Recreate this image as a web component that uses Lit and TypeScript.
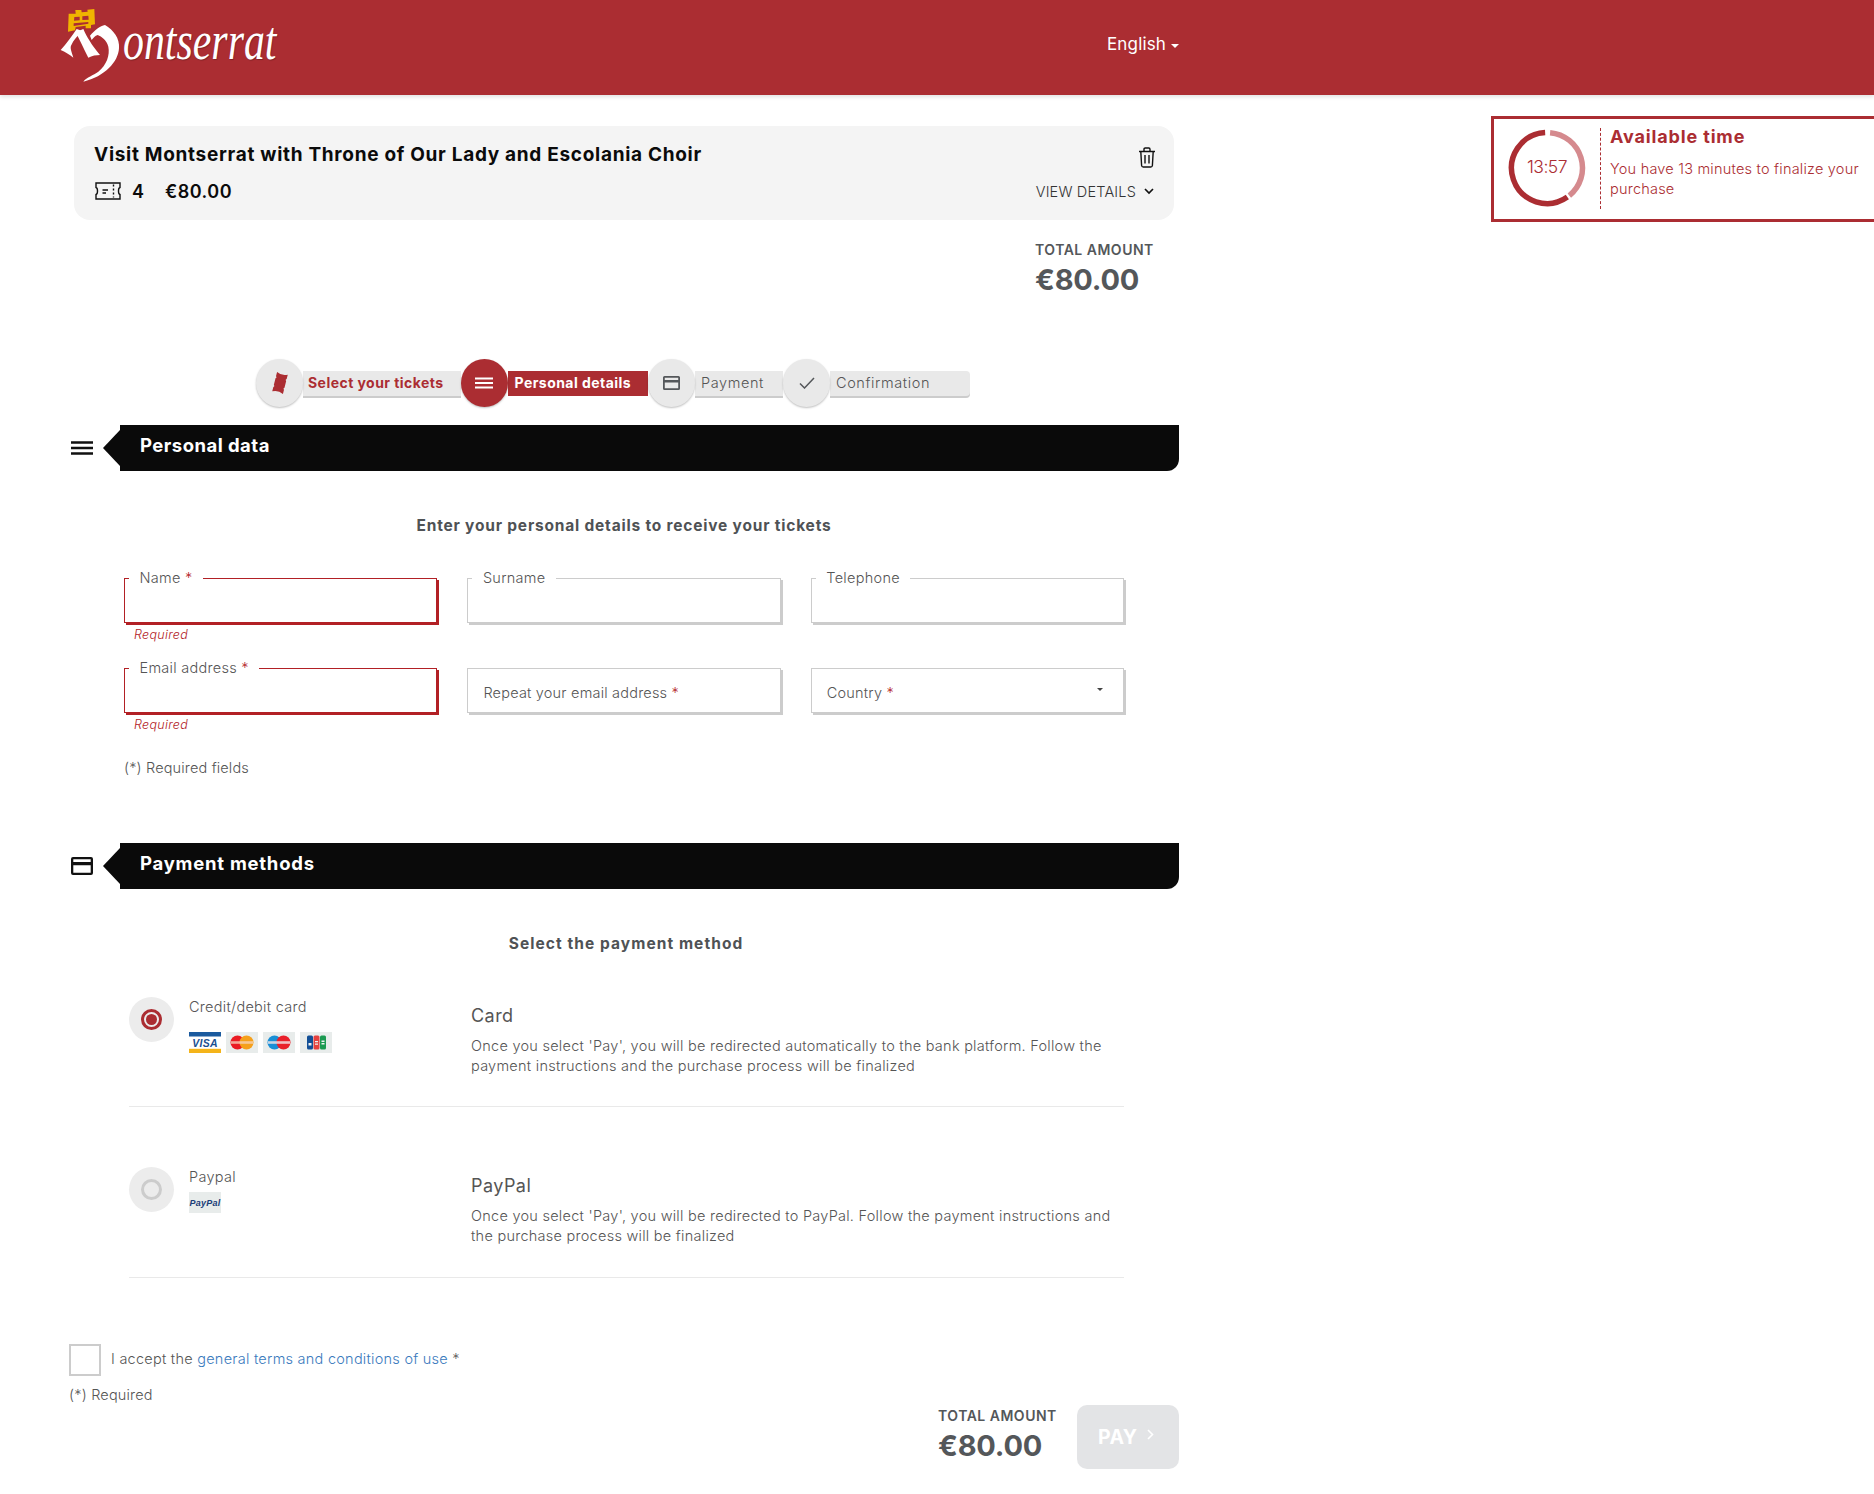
import { LitElement, html, css, svg } from "lit";
import { customElement } from "lit/decorators.js";

const polar = (cx: number, cy: number, r: number, deg: number) => {
  const a = ((deg - 90) * Math.PI) / 180;
  return [cx + r * Math.cos(a), cy + r * Math.sin(a)];
};
const arc = (cx: number, cy: number, r: number, a0: number, a1: number) => {
  const [x0, y0] = polar(cx, cy, r, a0);
  const [x1, y1] = polar(cx, cy, r, a1);
  const large = a1 - a0 > 180 ? 1 : 0;
  return `M${x0.toFixed(2)} ${y0.toFixed(2)}A${r} ${r} 0 ${large} 1 ${x1.toFixed(2)} ${y1.toFixed(2)}`;
};

const menuIcon = (w: number, h: number, color: string) => html`<svg width=${w} height=${h} viewBox="0 0 22 14"><path d="M0 1.5H22M0 7H22M0 12.5H22" stroke=${color} stroke-width="2.4" fill="none"/></svg>`;
const cardIcon = (w: number, h: number, color: string) => html`<svg width=${w} height=${h} viewBox="0 0 22 18"><path fill-rule="evenodd" fill=${color} d="M2 0H20A2 2 0 0 1 22 2V16A2 2 0 0 1 20 18H2A2 2 0 0 1 0 16V2A2 2 0 0 1 2 0ZM2.300 2.300V5H19.700V2.300ZM2.300 8.200V15.700H19.700V8.200Z"/></svg>`;

const cardLogos = {
  visa: html`<svg class="logo" viewBox="0 0 32 21"><rect width="32" height="21" fill="#fff"/><rect width="32" height="4.500" fill="#1a5a9e"/><rect y="16.800" width="32" height="4.200" fill="#f4b41a"/><text x="16" y="14.500" text-anchor="middle" font-family="Liberation Sans" font-weight="700" font-style="italic" font-size="10.500" fill="#1a4f92">VISA</text></svg>`,
  mc: html`<svg class="logo" viewBox="0 0 32 21"><rect width="32" height="21" fill="#e8eceb"/><circle cx="11.500" cy="10.500" r="7" fill="#ea1c24"/><circle cx="20.500" cy="10.500" r="7" fill="#f5a01b"/><rect x="5" y="9.200" width="22" height="2.600" fill="#f5d6c0" opacity=".75"/></svg>`,
  maestro: html`<svg class="logo" viewBox="0 0 32 21"><rect width="32" height="21" fill="#e8eceb"/><circle cx="11.500" cy="10.500" r="7" fill="#1a8fd6"/><circle cx="20.500" cy="10.500" r="7" fill="#e9202b"/><rect x="5" y="9.200" width="22" height="2.600" fill="#f2e6ea" opacity=".8"/></svg>`,
  jcb: html`<svg class="logo" viewBox="0 0 32 21"><rect width="32" height="21" fill="#e8eceb"/><rect x="7" y="3.500" width="6" height="14" rx="1.500" fill="#124f96"/><rect x="13.500" y="3.500" width="6" height="14" rx="1.500" fill="#e5413f"/><rect x="20" y="3.500" width="6" height="14" rx="1.500" fill="#1c9a52"/><path d="M8.500 11H11.500V13.500H8.500ZM15 9H18V10.200H15ZM15 11.500H18V12.700H15ZM21.500 8.500H24.500V10H21.500ZM21.500 11H24.500V12.500H21.500Z" fill="#eef2f1"/></svg>`,
  paypal: html`<svg class="logo" viewBox="0 0 32 21"><rect width="32" height="21" fill="#e8eceb"/><text x="16" y="14" text-anchor="middle" font-family="Liberation Sans" font-weight="700" font-style="italic" font-size="9" fill="#1c3e78">PayPal</text></svg>`,
};

@customElement("app-root")
export class AppRoot extends LitElement {
  static styles = css`
    :host { display: block; width: 1874px; height: 1494px; overflow: hidden; background: #fff; color: #555; font-family: Inter, "Liberation Sans", sans-serif; font-size: 15px; font-weight: 300; letter-spacing: .35px; }
    * { box-sizing: border-box; }
    header { height: 95px; background: #ab2d32; box-shadow: 0 2px 4px rgba(0,0,0,.12); display: flex; padding-left: 55px; position: relative; }
    .brand { flex: none; width: 1052px; display: flex; align-items: flex-start; padding-top: 5px; }
    .brand svg { flex: none; margin-right: -22px; }
    .brandtext { font-family: "Liberation Serif", serif; font-style: italic; font-size: 54px; line-height: 62px; color: #fff; letter-spacing: 0; transform: scaleX(.775); transform-origin: left top; white-space: nowrap; margin-top: 5px; text-shadow: 1px 1px 1px rgba(0,0,0,.25); font-weight: 400; }
    .lang { color: #fff; font-size: 17px; font-weight: 400; margin-top: 33px; line-height: 22px; display: flex; align-items: center; gap: 5px; letter-spacing: .15px; height: 22px; }
    .lang i { width: 0; height: 0; border: 4px solid transparent; border-top-color: #fff; border-bottom: 0; margin-top: 3px; }

    .page { display: grid; grid-template-columns: 1491px 1fr; }
    .aside { padding-top: 21px; }
    .timer { width: 500px; height: 106px; border: 3px solid #ab2d32; display: flex; align-items: flex-start; color: #ab2d32; }
    .timer svg { flex: none; margin: 9px 0 0 13px; }
    .timer svg text { font-family: Inter, sans-serif; font-weight: 300; font-size: 17.5px; fill: #ab2d32; letter-spacing: -.5px; }
    .sep { flex: none; height: 81px; margin: 9px 0 0 13px; border-left: 1px dashed #ab2d32; }
    .ttext { padding: 6px 0 0 9px; width: 275px; }
    .ttitle { font-size: 18px; font-weight: 700; line-height: 24px; letter-spacing: .85px; }
    .tdesc { margin-top: 10px; line-height: 20px; font-size: 14.5px; font-weight: 300; width: 262px; letter-spacing: .22px; }

    .card { margin: 31px 0 0 74px; width: 1100px; height: 94px; background: #f4f4f4; border-radius: 16px; padding: 17px 18px 0 20px; color: #0b0b0b; }
    .r1, .r2 { display: flex; justify-content: space-between; }
    .ctitle { font-size: 19px; line-height: 24px; font-weight: 700; letter-spacing: .7px; }
    .trash { margin-top: 4px; }
    .r2 { margin-top: 12px; height: 22px; align-items: center; }
    .qty { display: flex; align-items: center; font-size: 18px; font-weight: 600; letter-spacing: .5px; }
    .qty svg { margin-left: 1px; }
    .qty .n { margin-left: 11px; width: 33px; }
    .view { display: flex; align-items: center; gap: 8px; font-size: 14.5px; letter-spacing: .17px; margin-right: 2px; color: #333; }

    .total { margin: 22px 0 0 1035px; width: 160px; }
    .tl { font-size: 14px; font-weight: 600; line-height: 16px; letter-spacing: .5px; color: #54575a; }
    .tv { font-size: 29px; font-weight: 700; line-height: 40px; margin-top: 2px; margin-bottom: -1px; color: #54575a; letter-spacing: -.2px; }

    .steps { margin: 60px 0 0 256px; width: 714px; height: 48px; display: flex; }
    .step { display: flex; align-items: center; flex: none; }
    .s1 { width: 204.5px; } .s2 { width: 187.5px; } .s3 { width: 135px; } .s4 { width: 187px; }
    .circle { flex: none; position: relative; z-index: 1; width: 47px; height: 48px; border-radius: 50%; background: #e9e9e9; display: grid; place-items: center; box-shadow: 0 1px 2px rgba(0,0,0,.25); }
    .lbl { flex: 1; height: 25px; background: #e9e9e9; box-shadow: 0 2px 0 #ccc; padding-left: 6px; line-height: 24px; font-size: 14.5px; white-space: nowrap; letter-spacing: .6px; }
    .s1 .lbl { color: #ab2d32; font-weight: 700; font-size: 14px; letter-spacing: .45px; padding-left: 5px; line-height: 23px; }
    .s2 .circle { background: #ab2d32; }
    .s2 .lbl { background: #ab2d32; color: #fff; font-weight: 700; font-size: 14px; letter-spacing: .45px; box-shadow: none; padding-left: 7px; line-height: 23px; }
    .s4 .lbl { border-radius: 0 4px 4px 0; }

    .sect { display: flex; align-items: center; margin: 18px 0 0 71px; width: 1108px; height: 46px; }
    .sicon { flex: none; width: 22px; margin-right: 10px; display: grid; place-items: center; }
    .arrow { flex: none; width: 17px; height: 36px; background: #0a0a0a; clip-path: polygon(100% 0, 0 50%, 100% 100%); }
    .bar { flex: 1; height: 46px; background: #0a0a0a; border-radius: 0 0 12px 0; color: #fff; font-size: 18.5px; font-weight: 700; line-height: 41px; padding-left: 20px; letter-spacing: .47px; }

    .sub { text-align: center; font-size: 15.5px; font-weight: 700; line-height: 20px; margin-top: 45px; margin-bottom: -1px; color: #4f5255; letter-spacing: .8px; }
    .sub.a { width: 1248px; } .sub.b { width: 1252px; letter-spacing: 1.07px; }
    .sect.pay .bar { letter-spacing: .75px; }
    .fields { margin: 43px 0 0 124px; display: grid; grid-template-columns: repeat(3, 313.4px); column-gap: 30px; grid-auto-rows: 90px; }
    .box { position: relative; height: 45px; border: 1px solid #ccc; box-shadow: 2px 2px 0 #ccc; background: #fff; }
    .box.err { border-color: #b22025; box-shadow: 2px 2px 0 #b22025; }
    .flabel { position: absolute; left: 4px; top: -9px; padding: 0 10.5px; background: #fff; line-height: 16px; font-size: 14.5px; letter-spacing: .28px; white-space: nowrap; }
    .ph { padding: 14px 0 0 15px; line-height: 20px; font-size: 14.5px; letter-spacing: .2px; }
    .star { color: #b22025; }
    .caret { position: absolute; right: 20px; top: 19px; width: 0; height: 0; border: 3.5px solid transparent; border-top-color: #444; border-bottom: 0; }
    .req { font-style: italic; color: #b22025; font-size: 12.5px; line-height: 16px; padding: 4px 0 0 10px; letter-spacing: .3px; }
    .note { margin-left: 124px; line-height: 20px; letter-spacing: .15px; font-size: 14.5px; }

    .sect.pay { margin-top: 65px; }
    .methods { margin: 44px 0 0 129px; width: 995px; }
    .method { display: flex; height: 111px; border-bottom: 1px solid #e9e9e9; margin-bottom: 59px; }
    .method.first { height: 110px; margin-bottom: 60px; }
    .method.last { margin-bottom: 0; }
    .radio { flex: none; width: 45px; height: 45px; border-radius: 50%; background: #ececec; display: grid; place-items: center; margin-right: 15px; }
    .ring { width: 21px; height: 21px; border: 3px solid #ccc; border-radius: 50%; display: grid; place-items: center; }
    .ring.on { border-color: #ab2d32; }
    .ring.on i { width: 11px; height: 11px; border-radius: 50%; background: #ab2d32; }
    .mlabel { flex: none; width: 282px; line-height: 20px; font-size: 14.5px; letter-spacing: .28px; }
    .logos { display: flex; gap: 5px; margin-top: 15px; }
    .logos.p { margin-top: 5px; }
    .logo { width: 32px; height: 21px; display: block; }
    .mbody { flex: 1; padding-top: 7px; }
    .mtitle { font-size: 18px; line-height: 24px; font-weight: 400; letter-spacing: .45px; }
    .mdesc { margin-top: 8px; line-height: 20px; font-size: 14.5px; letter-spacing: .26px; width: 650px; }

    .accept { display: flex; align-items: center; margin: 66px 0 0 69px; height: 32px; letter-spacing: .25px; font-size: 14.5px; }
    .accept span { margin-top: -4px; }
    .check { flex: none; width: 32px; height: 32px; border: 2px solid #ccc; margin-right: 10px; }
    .accept a { color: #3a7abd; text-decoration: none; }
    .note2 { margin: 9px 0 0 69px; line-height: 20px; font-size: 14.5px; letter-spacing: .18px; }
    .foot { display: flex; justify-content: flex-end; margin-top: 0; width: 1179px; }
    .ftotal { padding-top: 3px; width: 139px; }
    .paybtn { flex: none; width: 102px; height: 64px; border-radius: 10px; background: #e3e4e6; color: #fff; font-weight: 700; font-size: 19.5px; display: flex; align-items: center; padding-left: 21px; gap: 9px; letter-spacing: .4px; }
    .paybtn svg { margin-top: -6px; }
  `;

  render() {
    return html`
      <header>
        <div class="brand">
          <svg width="90" height="80" viewBox="0 0 270 240">
            <path fill="#f0b400" fill-rule="evenodd" d="M41 26L62 26L61 15L79 15L80 22L98 20L97 14L118 12L120 58L108 60L108 70L92 70L92 62L62 66L60 76L39 80ZM58 36L57 47L74 46L74 35ZM82 34L82 45L101 44L100 32ZM56 55L56 63L100 56L100 51Z"/>
            <path fill="#fff" d="M65 72C50 95 35 115 17 135C30 140 45 150 55 158C50 140 45 130 48 122C55 105 70 90 82 78Z"/>
            <path fill="#fff" d="M62 82L85 72C95 95 110 120 135 150C125 150 110 152 100 158C85 130 75 105 62 82Z"/>
            <path fill="#fff" d="M105 92C120 75 135 62 150 60C175 75 195 100 192 130C190 170 150 215 85 230C95 215 115 212 130 200C155 180 165 150 160 125C155 105 140 95 128 90C120 92 115 100 110 105Z"/>
          </svg>
          <div class="brandtext">ontserrat</div>
        </div>
        <div class="lang">English<i></i></div>
      </header>

      <div class="page">
        <main>
          <section class="card">
            <div class="r1">
              <div class="ctitle">Visit Montserrat with Throne of Our Lady and Escolania Choir</div>
              <svg class="trash" width="18" height="21" viewBox="0 0 18 21" fill="none" stroke="#111" stroke-width="1.400"><path d="M1 4.500H17M6 4.500V2.200C6 1.500 6.500 1 7.200 1H10.800C11.500 1 12 1.500 12 2.200V4.500M2.800 4.500L3.600 18.500C3.700 19.400 4.400 20 5.200 20H12.800C13.600 20 14.300 19.400 14.400 18.500L15.200 4.500M7 8V16.500M11 8V16.500"/></svg>
            </div>
            <div class="r2">
              <div class="qty">
                <svg width="26" height="18" viewBox="0 0 26 18" fill="none" stroke="#111" stroke-width="1.400"><path d="M1 1H25V5.500C23 6 23 12 25 12.500V17H1V12.500C3 12 3 6 1 5.500ZM7.500 8H13M7.500 11H11"/><path d="M18.500 2.500V15.500" stroke-dasharray="2 2"/></svg>
                <span class="n">4</span><span>€80.00</span>
              </div>
              <div class="view">VIEW DETAILS <svg width="10" height="7" viewBox="0 0 10 7" fill="none" stroke="#111" stroke-width="1.700"><path d="M1 1L5 5L9 1"/></svg></div>
            </div>
          </section>

          <div class="total"><div class="tl">TOTAL AMOUNT</div><div class="tv">€80.00</div></div>

          <nav class="steps">
            <div class="step s1">
              <div class="circle"><svg width="16" height="22" viewBox="0 0 16 22"><path fill="#ab2d32" transform="rotate(14 8 11)" d="M2.500 1Q8 4 13.500 1L13.500 5.500Q12 6.500 13.500 7.500V14.500Q12 15.500 13.500 16.500L13.500 21Q8 18 2.500 21L2.500 16.500Q4 15.500 2.500 14.500V7.500Q4 6.500 2.500 5.500Z"/></svg></div>
              <div class="lbl">Select your tickets</div>
            </div>
            <div class="step s2">
              <div class="circle">${menuIcon(18, 14, "#fff")}</div>
              <div class="lbl">Personal details</div>
            </div>
            <div class="step s3">
              <div class="circle">${cardIcon(17, 14, "#54575a")}</div>
              <div class="lbl">Payment</div>
            </div>
            <div class="step s4">
              <div class="circle"><svg width="16" height="12" viewBox="0 0 16 12" fill="none" stroke="#54575a" stroke-width="1.500"><path d="M1 6.500L5.500 11L15 1"/></svg></div>
              <div class="lbl">Confirmation</div>
            </div>
          </nav>

          <div class="sect">
            <div class="sicon">${menuIcon(22, 14, "#111")}</div>
            <div class="arrow"></div>
            <div class="bar">Personal data</div>
          </div>

          <div class="sub a">Enter your personal details to receive your tickets</div>

          <div class="fields">
            <div><div class="box err"><span class="flabel">Name <span class="star">*</span></span></div><div class="req">Required</div></div>
            <div><div class="box"><span class="flabel">Surname</span></div></div>
            <div><div class="box"><span class="flabel">Telephone</span></div></div>
            <div><div class="box err"><span class="flabel">Email address <span class="star">*</span></span></div><div class="req">Required</div></div>
            <div><div class="box"><div class="ph">Repeat your email address <span class="star">*</span></div></div></div>
            <div><div class="box"><div class="ph">Country <span class="star">*</span></div><i class="caret"></i></div></div>
          </div>
          <div class="note">(*) Required fields</div>

          <div class="sect pay">
            <div class="sicon">${cardIcon(22, 18, "#111")}</div>
            <div class="arrow"></div>
            <div class="bar">Payment methods</div>
          </div>

          <div class="sub b">Select the payment method</div>

          <div class="methods">
            <div class="method first">
              <div class="radio"><div class="ring on"><i></i></div></div>
              <div class="mlabel">Credit/debit card
                <div class="logos">${cardLogos.visa}${cardLogos.mc}${cardLogos.maestro}${cardLogos.jcb}</div>
              </div>
              <div class="mbody">
                <div class="mtitle">Card</div>
                <div class="mdesc">Once you select 'Pay', you will be redirected automatically to the bank platform. Follow the payment instructions and the purchase process will be finalized</div>
              </div>
            </div>
            <div class="method last">
              <div class="radio"><div class="ring"></div></div>
              <div class="mlabel">Paypal
                <div class="logos p">${cardLogos.paypal}</div>
              </div>
              <div class="mbody">
                <div class="mtitle">PayPal</div>
                <div class="mdesc">Once you select 'Pay', you will be redirected to PayPal. Follow the payment instructions and the purchase process will be finalized</div>
              </div>
            </div>
          </div>

          <div class="accept"><div class="check"></div><span>I accept the <a href="#">general terms and conditions of use</a> *</span></div>
          <div class="note2">(*) Required</div>

          <div class="foot">
            <div class="ftotal"><div class="tl">TOTAL AMOUNT</div><div class="tv">€80.00</div></div>
            <div class="paybtn">PAY <svg width="7" height="11" viewBox="0 0 7 11" fill="none" stroke="#fff" stroke-width="1.600"><path d="M1 1L5.500 5.500L1 10"/></svg></div>
          </div>
        </main>

        <aside class="aside">
          <div class="timer">
            <svg width="80" height="80" viewBox="0 0 80 80">
              ${svg`<path d=${arc(40, 40, 35.5, 145, 357)} fill="none" stroke="#ab2d32" stroke-width="5.500"/>
              <path d=${arc(40, 40, 35.5, 5, 141)} fill="none" stroke="#d58a8e" stroke-width="5.500"/>
              <text x="40" y="45" text-anchor="middle">13:57</text>`}
            </svg>
            <div class="sep"></div>
            <div class="ttext">
              <div class="ttitle">Available time</div>
              <div class="tdesc">You have 13 minutes to finalize your purchase</div>
            </div>
          </div>
        </aside>
      </div>
    `;
  }
}
